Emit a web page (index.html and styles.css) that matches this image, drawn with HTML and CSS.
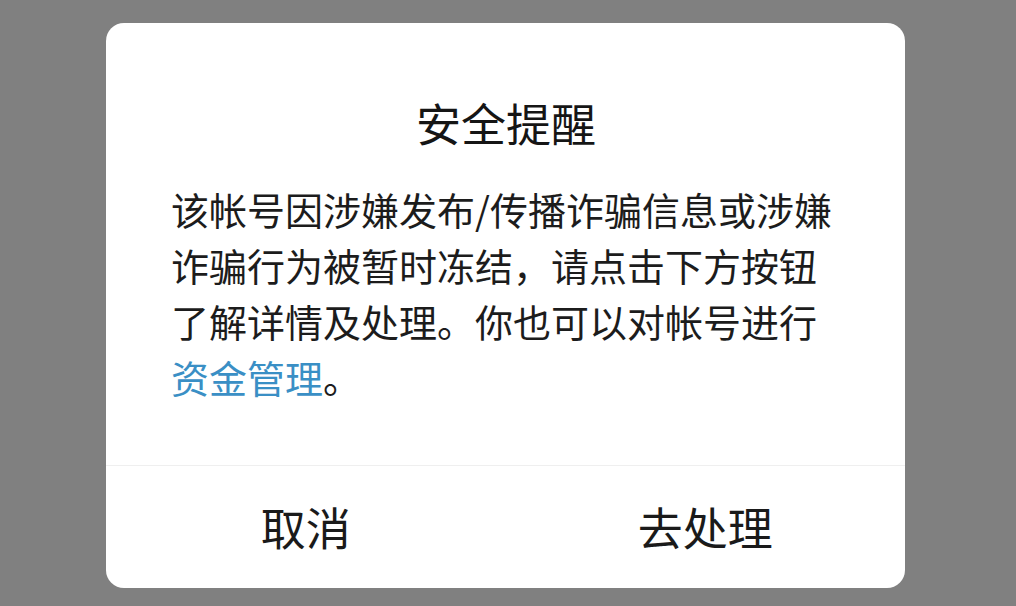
FILE: index.html
```html
<!DOCTYPE html>
<html lang="zh-CN">
<head>
<meta charset="utf-8">
<title>安全提醒</title>
<link rel="stylesheet" href="styles.css">
</head>
<body>
<div class="overlay">
  <div class="dialog">
    <div class="dialog-body">
      <h1 class="dialog-title">安全提醒</h1>
      <p class="dialog-text">该帐号因涉嫌发布/传播诈骗信息或涉嫌诈骗行为被暂时冻结，请点击下方按钮了解详情及处理。你也可以对帐号进行<a class="link" href="#">资金管理</a>。</p>
    </div>
    <div class="dialog-actions">
      <button class="action">取消</button>
      <button class="action">去处理</button>
    </div>
  </div>
</div>
</body>
</html>
```
FILE: styles.css
```css
* { box-sizing: border-box; }
html, body {
  margin: 0;
  padding: 0;
  width: 1016px;
  height: 606px;
  overflow: hidden;
  background: #808080;
  font-family: "Noto Sans CJK SC", "Noto Sans", sans-serif;
}
.overlay {
  padding: 23px 0 0 106px;
}
.dialog {
  width: 799px;
  height: 565px;
  background: #ffffff;
  border-radius: 18px;
  display: flex;
  flex-direction: column;
}
.dialog-body {
  padding: 70px 64px 0 65px;
  height: 443px;
  border-bottom: 1px solid #efefef;
}
.dialog-title {
  margin: 0;
  font-size: 45px;
  line-height: 60px;
  font-weight: 400;
  text-align: center;
  color: #151515;
}
.dialog-text {
  margin: 28px 0 0;
  font-size: 38px;
  line-height: 56px;
  color: #1c1c1c;
}
.link {
  color: #3a8fc5;
  text-decoration: none;
}
.dialog-actions {
  flex: 1;
  display: flex;
}
.action {
  flex: 1;
  border: 0;
  background: transparent;
  font-family: inherit;
  font-size: 45px;
  color: #1a1a1a;
  padding: 0 0 2px;
}
```
